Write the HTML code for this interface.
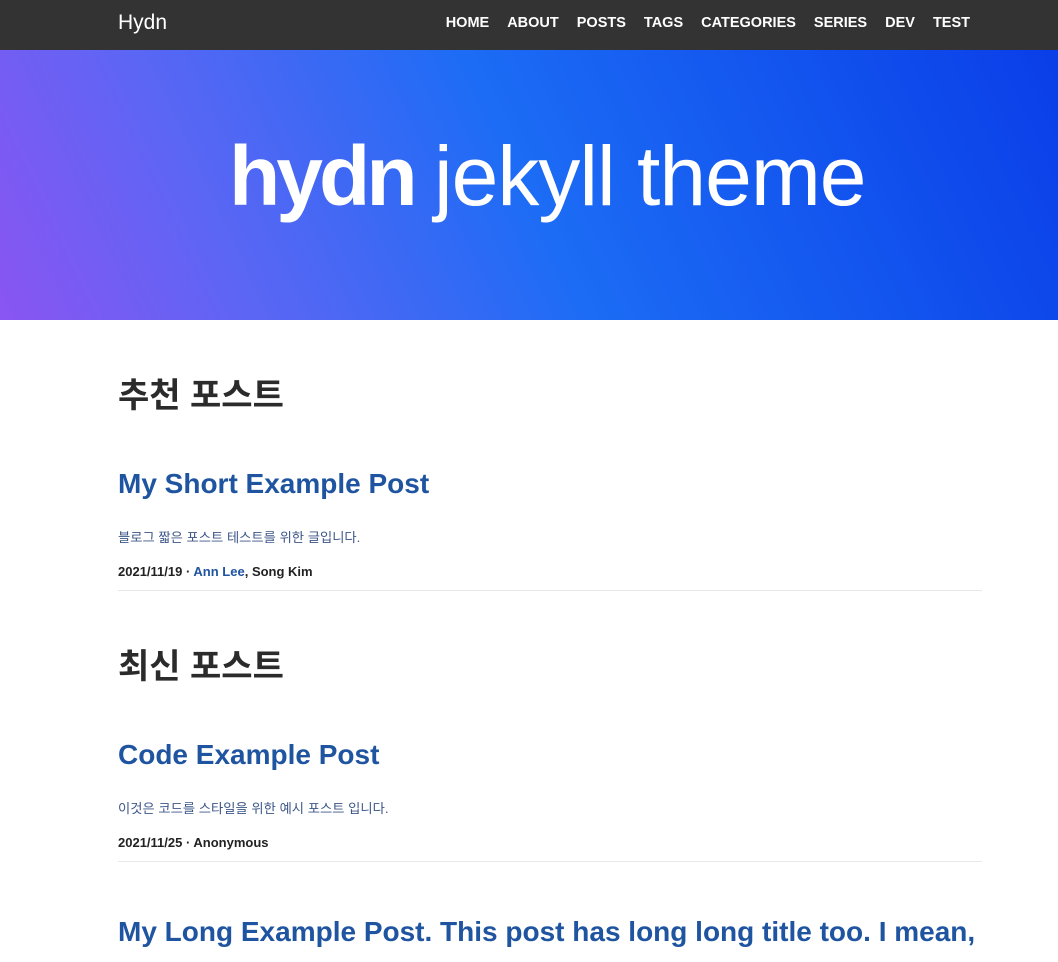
<!DOCTYPE html>
<html><head><meta charset="utf-8"><style>
*{margin:0;padding:0;box-sizing:border-box}
body{width:1058px;height:962px;overflow:hidden;background:#fff;font-family:"Liberation Sans","Noto Sans CJK KR",sans-serif}
.nav{height:50px;background:#333;position:relative;color:#fff}
.logo{position:absolute;left:118px;top:11px;font-size:21px}
.menu{position:absolute;right:88px;top:15px;font-size:14.5px;font-weight:bold;letter-spacing:0px}
.menu span{margin-left:18px}
.hero{height:270px;background:linear-gradient(65deg,#8a55f2 0%,#5b66f4 22%,#1c6cf5 50%,#0a3ee8 100%);position:relative;color:#fff}
.hero .t{position:absolute;left:229px;top:84px;font-size:84px;line-height:1;white-space:nowrap;letter-spacing:-3px}
.hero b{letter-spacing:-4px}
.hero .l{font-weight:normal;letter-spacing:-1px}
.c{padding:0 76px 0 118px}
h2{font-size:34px;color:#2b2b2b;font-weight:bold;margin-top:56px;height:40px;line-height:40px}
h3{font-size:28px;color:#1f54a0;font-weight:bold;margin-top:50px;line-height:36px;white-space:nowrap}
.d{font-size:13.3px;color:#3d5688;margin-top:25px}
.m{font-size:13px;font-weight:bold;color:#222;margin-top:18px;padding-bottom:11px;border-bottom:1px solid #e8e8e8}
.m a{color:#1f54a0}
</style></head><body>
<div class="nav"><div class="logo">Hydn</div>
<div class="menu"><span>HOME</span><span>ABOUT</span><span>POSTS</span><span>TAGS</span><span>CATEGORIES</span><span>SERIES</span><span>DEV</span><span>TEST</span></div></div>
<div class="hero"><div class="t"><b>hydn</b> <span class="l">jekyll theme</span></div></div>
<div class="c">
<h2>추천 포스트</h2>
<h3>My Short Example Post</h3>
<div class="d">블로그 짧은 포스트 테스트를 위한 글입니다.</div>
<div class="m">2021/11/19 · <a>Ann Lee</a>, Song Kim</div>
<h2 style="margin-top:56px">최신 포스트</h2>
<h3>Code Example Post</h3>
<div class="d">이것은 코드를 스타일을 위한 예시 포스트 입니다.</div>
<div class="m">2021/11/25 · Anonymous</div>
<h3 style="margin-top:52px">My Long Example Post. This post has long long title too. I mean,</h3>
</div>
</body></html>
